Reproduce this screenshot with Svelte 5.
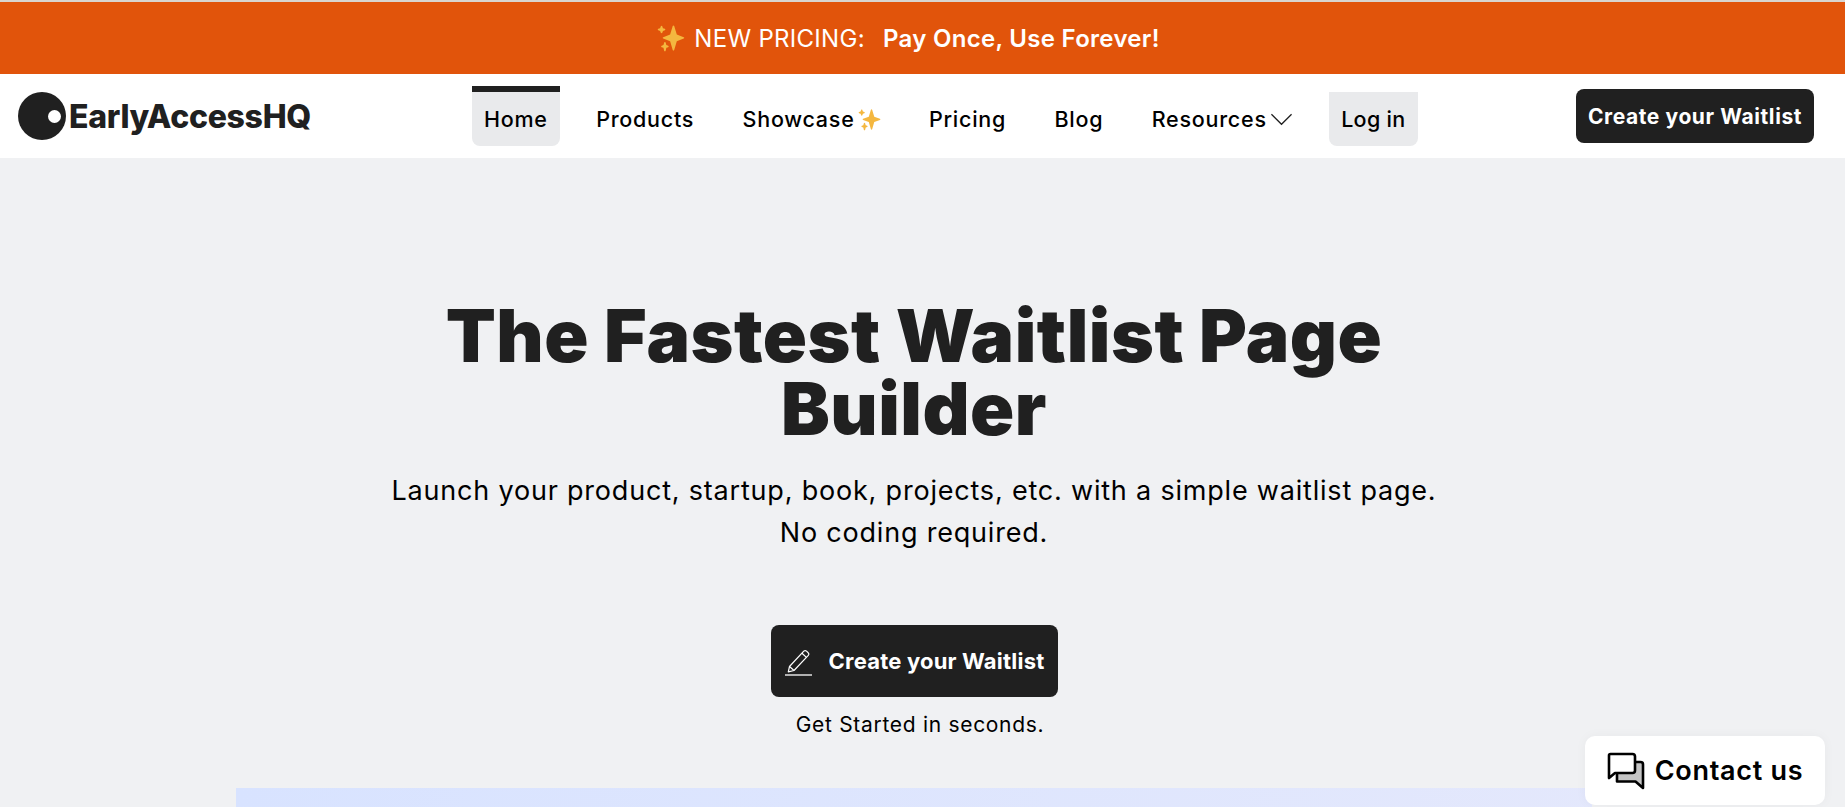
<script>
  const links = ['Products', 'Showcase', 'Pricing', 'Blog', 'Resources'];
</script>

<svelte:head>
  <title>EarlyAccessHQ</title>
</svelte:head>

{#snippet sparkle(size)}
  <svg class="sparkle" width={size} height={size} viewBox="0 0 36 36" aria-hidden="true">
    <path fill="#f4b73f" d="M34.347 16.893l-8.899-3.294-3.323-10.891c-.128-.42-.517-.708-.956-.708-.439 0-.828.288-.956.708l-3.322 10.891-8.9 3.294c-.393.146-.653.519-.653.938 0 .418.26.793.653.938l8.895 3.293 3.324 11.223c.126.424.516.715.959.715.442 0 .833-.291.959-.716l3.324-11.223 8.896-3.293c.391-.144.652-.518.652-.937 0-.418-.261-.792-.653-.938z" />
    <path fill="#f4b73f" d="M14.347 27.894l-2.314-.856-.9-3.3c-.118-.436-.513-.738-.964-.738-.451 0-.846.302-.965.737l-.9 3.3-2.313.856c-.393.145-.653.52-.653.938 0 .418.26.793.653.938l2.301.853.907 3.622c.112.444.511.756.97.756.459 0 .858-.312.97-.757l.907-3.622 2.301-.853c.393-.144.653-.519.653-.937 0-.418-.26-.793-.653-.938z" />
    <path fill="#f4b73f" d="M10.009 6.231l-2.364-.875-.876-2.365c-.145-.393-.519-.653-.938-.653-.418 0-.792.26-.938.653l-.875 2.365-2.365.875c-.393.146-.653.52-.653.938 0 .418.26.793.653.938l2.365.875.875 2.365c.146.393.52.653.938.653.418 0 .792-.26.938-.653l.875-2.365 2.365-.875c.393-.146.653-.52.653-.938 0-.418-.26-.792-.653-.938z" />
  </svg>
{/snippet}

<div class="page">
  <div class="banner">
    {@render sparkle(28)}
    <span class="light">NEW PRICING:</span>
    <strong>Pay Once, Use Forever!</strong>
  </div>

  <header class="nav">
    <a class="logo" href="#top">
      <span class="logo-mark"><span class="logo-dot"></span></span>
      <span>EarlyAccessHQ</span>
    </a>

    <nav class="links">
      <a class="link active" href="#home">Home</a>
      {#each links as link}
        <a class="link" href="#{link.toLowerCase()}">
          {link}
          {#if link === 'Showcase'}
            {@render sparkle(23)}
          {/if}
          {#if link === 'Resources'}
            <svg width="23" height="14" viewBox="0 0 24 14" aria-hidden="true">
              <path d="M1.500 2 12 12.500 22.500 2" fill="none" stroke="#202020" stroke-width="1.300" />
            </svg>
          {/if}
        </a>
      {/each}
      <a class="link login" href="#login">Log in</a>
    </nav>

    <a class="nav-cta" href="#create">Create your Waitlist</a>
  </header>

  <main class="hero">
    <h1>The Fastest Waitlist Page<br />Builder</h1>
    <p class="sub">Launch your product, startup, book, projects, etc. with a simple waitlist page.<br />No coding required.</p>
    <a class="cta" href="#create">
      <svg width="30" height="30" viewBox="0 0 30 30" aria-hidden="true">
        <path d="M5.500 20.500 19.800 5.200c.8-.8 1.900-.8 2.700-.1l1.700 1.600c.8.700.8 1.900.1 2.700L10 24.500l-5.700 1.300z" fill="none" stroke="#fff" stroke-width="1.200" stroke-linejoin="round" />
        <path d="M18 7.200l4.400 4.200M5.500 20.500 10 24.500" fill="none" stroke="#fff" stroke-width="1.200" />
        <path d="M1 29h27" stroke="#fff" stroke-width="1.300" />
      </svg>
      <span>Create your Waitlist</span>
    </a>
    <p class="note">Get Started in seconds.</p>
    <div class="preview"></div>
  </main>

  <a class="contact" href="#contact">
    <svg width="38" height="38" viewBox="0 0 38 38" aria-hidden="true">
      <path d="M10 10h23.500c1.500 0 2.500 1 2.500 2.500V36l-7.500-6.500H10z" fill="#c4c4c4" stroke="#000" stroke-width="2.600" stroke-linejoin="round" />
      <path d="M3.500 2h22c1.500 0 2.500 1 2.500 2.500v14c0 1.500-1 2.500-2.500 2.500H8l-6 5V3.500C2 2.500 2.500 2 3.500 2z" fill="#fff" stroke="#000" stroke-width="2.600" stroke-linejoin="round" />
    </svg>
    <span>Contact us</span>
  </a>
</div>

<style>
  :global(body) {
    margin: 0;
    background: #f0f1f3;
    font-family: Inter, 'Noto Sans', sans-serif;
    color: #202020;
  }
  a {
    color: inherit;
    text-decoration: none;
  }
  .page {
    height: 807px;
    overflow: hidden;
    border-top: 2px solid #d9d5cf;
    box-sizing: border-box;
    position: relative;
  }
  .sparkle {
    flex: none;
  }
  .banner {
    height: 72px;
    padding-right: 28px;
    background: #e1540b;
    color: #fff;
    display: flex;
    align-items: center;
    justify-content: center;
    gap: 9px;
    font-size: 24px;
    letter-spacing: 0.3px;
  }
  .light {
    font-weight: 400;
    margin-right: 9px;
  }
  .banner strong {
    font-weight: 600;
  }
  .nav {
    height: 84px;
    background: #fff;
    display: flex;
    align-items: flex-start;
    padding: 0 31px 0 18px;
  }
  .logo {
    display: flex;
    align-items: center;
    margin-top: 18px;
    font-size: 32px;
    font-weight: 800;
    letter-spacing: -0.3px;
    color: #202020;
  }
  .logo-mark {
    width: 48px;
    height: 48px;
    border-radius: 50%;
    background: #202020;
    display: flex;
    align-items: center;
    justify-content: flex-end;
    padding-right: 5px;
    box-sizing: border-box;
    margin-right: 3px;
  }
  .logo-dot {
    width: 13px;
    height: 13px;
    border-radius: 50%;
    background: #fff;
  }
  .links {
    display: flex;
    gap: 24.4px;
    margin-top: 18px;
    margin-left: 161px;
    font-size: 21.5px;
    font-weight: 550;
    letter-spacing: 0.75px;
    color: #000;
  }
  .link {
    height: 54px;
    display: flex;
    align-items: center;
    gap: 3px;
    padding: 0 12px;
    border-radius: 0 0 8px 8px;
    box-sizing: border-box;
    white-space: nowrap;
  }
  .link.active {
    height: 60px;
    margin-top: -6px;
    background: #e9eaec;
    border-top: 6px solid #202020;
  }
  .link.login {
    background: #e9eaec;
    letter-spacing: 0.3px;
  }
  .nav-cta {
    margin-top: 15px;
    margin-left: auto;
    height: 54px;
    width: 238px;
    display: flex;
    align-items: center;
    justify-content: center;
    background: #202020;
    color: #fff;
    border-radius: 8px;
    font-size: 21px;
    font-weight: 700;
    letter-spacing: 0.6px;
  }
  .hero {
    width: 1828px;
    display: flex;
    flex-direction: column;
    align-items: center;
    padding-top: 141px;
  }
  h1 {
    margin: 0;
    font-size: 73px;
    line-height: 73px;
    font-weight: 900;
    letter-spacing: 0.5px;
    text-align: center;
    color: #202020;
  }
  .sub {
    margin: 25px 0 0;
    font-size: 27px;
    line-height: 42px;
    letter-spacing: 0.8px;
    text-align: center;
    color: #000;
  }
  .cta {
    margin-top: 71px;
    width: 287px;
    height: 72px;
    display: flex;
    align-items: center;
    justify-content: center;
    gap: 15px;
    background: #202020;
    color: #fff;
    border-radius: 8px;
    font-size: 22px;
    font-weight: 700;
    letter-spacing: 0.2px;
  }
  .note {
    margin: 14px 0 0 12px;
    font-size: 21px;
    line-height: 28px;
    letter-spacing: 0.7px;
    color: #000;
  }
  .preview {
    margin-top: 49px;
    width: 1356px;
    height: 300px;
    background: linear-gradient(100deg, #d8e3ff, #e4e8fc);
  }
  .contact {
    position: absolute;
    right: 20px;
    bottom: 2px;
    width: 240px;
    height: 69px;
    display: flex;
    align-items: center;
    justify-content: center;
    gap: 10px;
    background: #fff;
    border-radius: 10px;
    color: #000;
    font-size: 27px;
    font-weight: 600;
    letter-spacing: 0.7px;
    box-shadow: 0 0 12px rgba(0, 0, 0, 0.04);
  }
</style>
